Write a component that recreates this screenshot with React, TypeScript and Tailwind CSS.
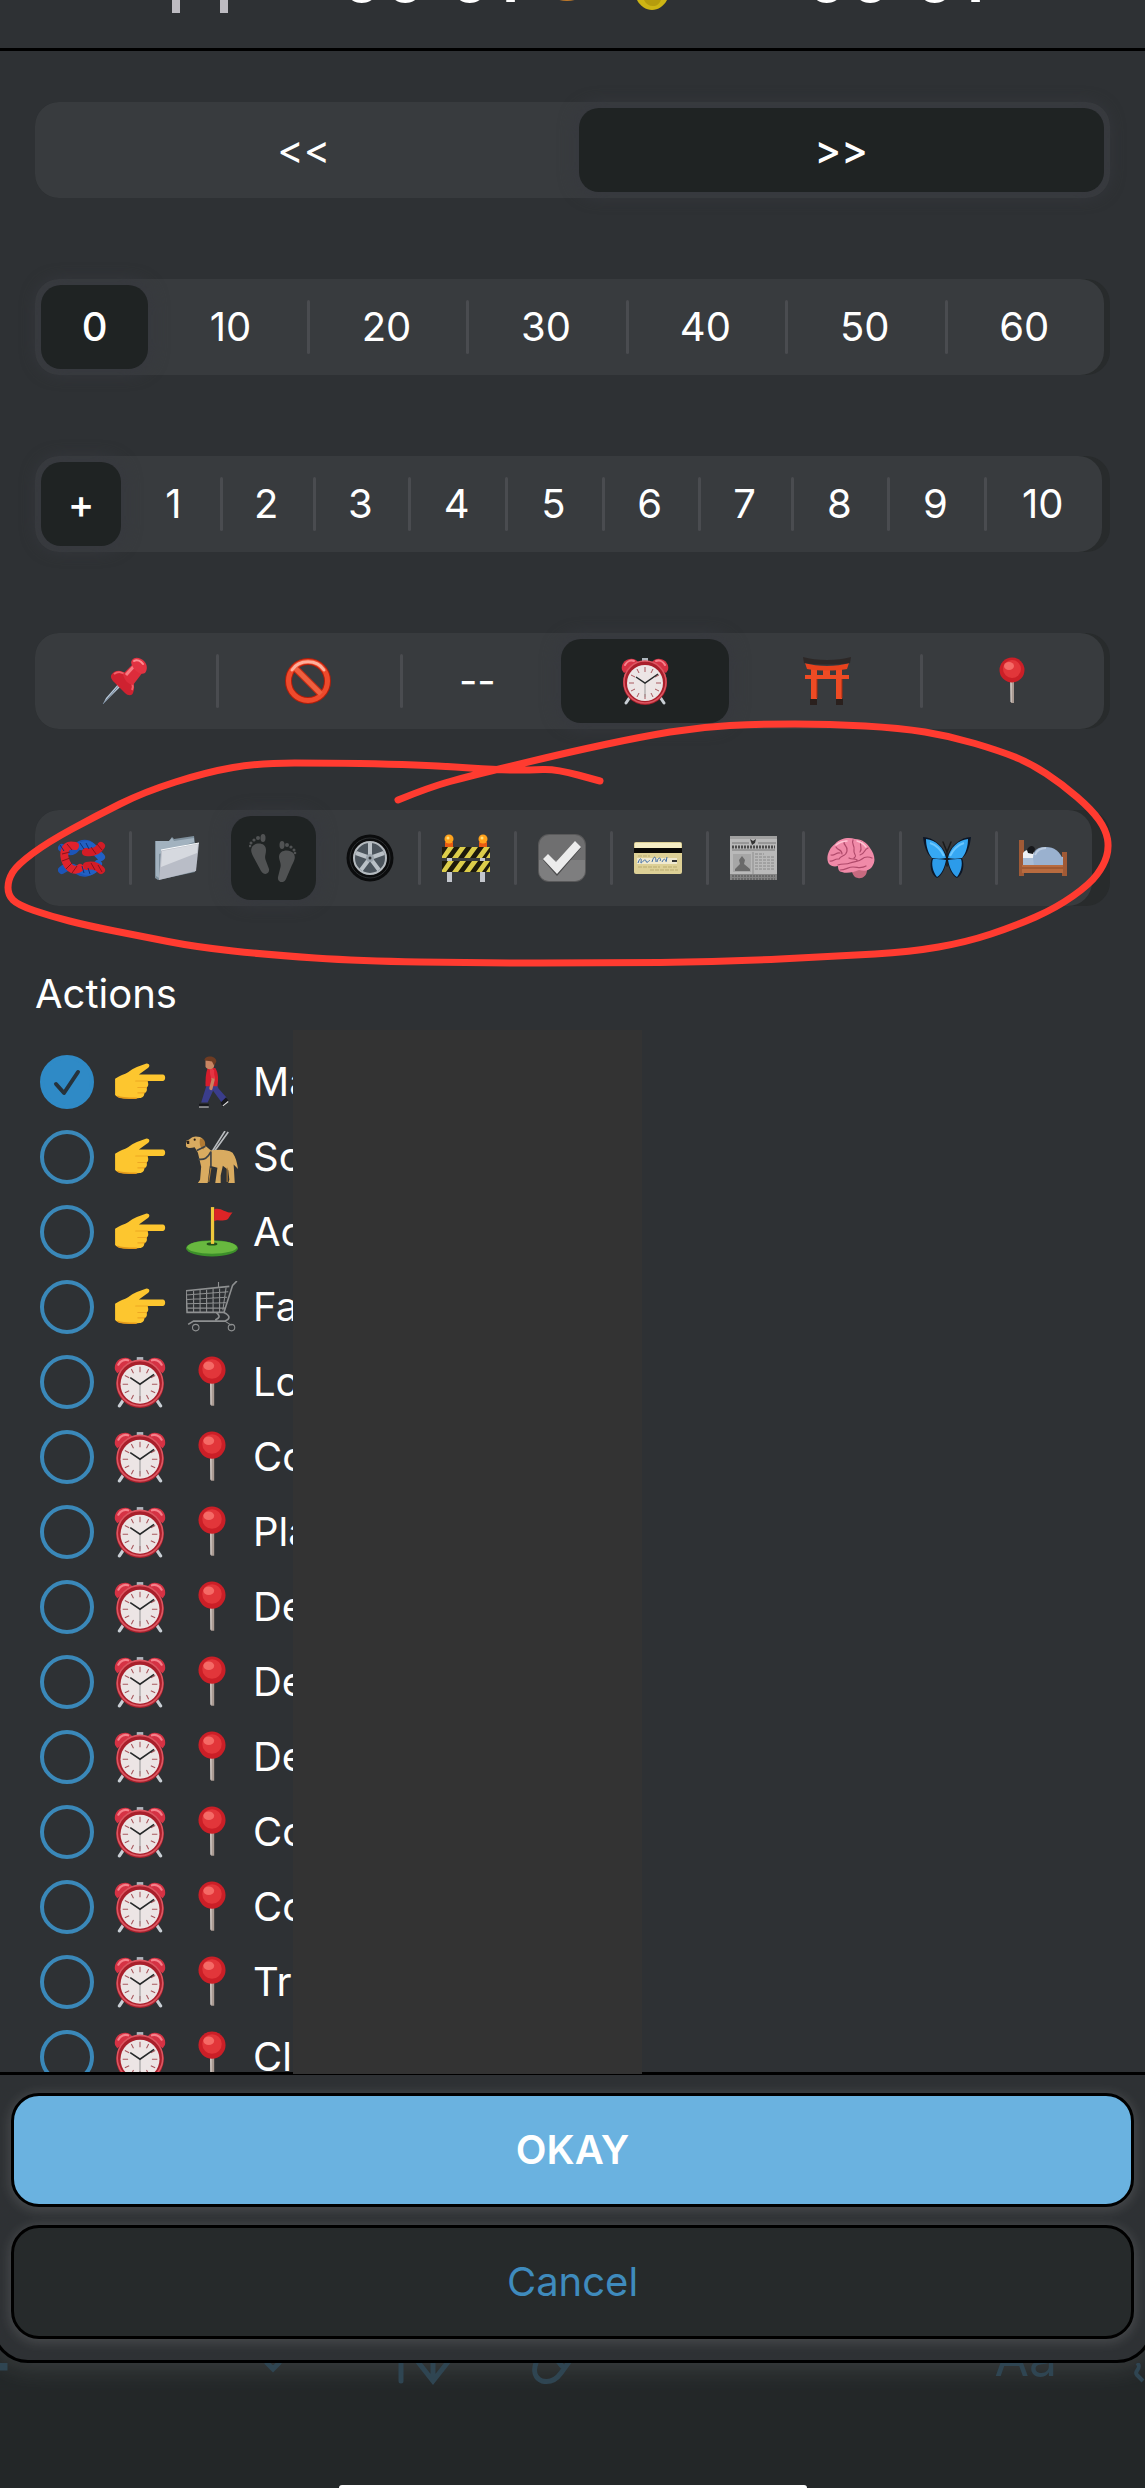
import { useState } from "react";
import type { ReactNode } from "react";

type IconProps = { className?: string };
type IconType = (props: IconProps) => ReactNode;

function Svg({ className = "size-12", children }: IconProps & { children: ReactNode }) {
  return (
    <svg viewBox="0 0 48 48" className={className} fill="none" aria-hidden="true">
      {children}
    </svg>
  );
}

const Pushpin: IconType = (p) => (
  <Svg {...p}>
    <path d="M20 28 1 47l3-6 14-16z" fill="#b9c9da" />
    <path d="M1 47 19 26" stroke="#6f8194" strokeWidth="1" />
    <path d="M10 17c4-5 10-4 15 1 6 5 9 11 6 18-1 3-5 3-8 0L12 25c-3-3-4-6-2-8Z" fill="#cf2230" />
    <path d="M12 17c4-3 9-2 13 2 5 5 7 10 5 14" stroke="#f2606a" strokeWidth="2" />
    <path d="m21 17 10-10 10 8-10 13c-5-1-9-5-10-11Z" fill="#dd2c3b" />
    <path d="m24 18 9-10" stroke="#f77b82" strokeWidth="3" />
    <path d="M30 3c3-4 9-2 12 1s4 8 1 12c-3 2-7 0-10-3-3-4-5-7-3-10Z" fill="#e23342" />
    <path d="M32 4c3-2 7 0 9 3" stroke="#ff8d92" strokeWidth="2" strokeLinecap="round" />
  </Svg>
);

const Prohibited: IconType = (p) => (
  <Svg {...p}>
    <circle cx="24" cy="24" r="19.500" stroke="#b21d0a" strokeWidth="7" />
    <path d="m11 11 26 26" stroke="#c92b12" strokeWidth="7" />
    <circle cx="24" cy="24" r="19.500" stroke="#ee4a2c" strokeWidth="5" />
    <path d="m11 11 26 26" stroke="#f0603f" strokeWidth="5" />
    <path d="M8 13C15 2 33 2 40 13" stroke="#ffb09c" strokeWidth="3" strokeLinecap="round" />
  </Svg>
);

const AlarmClock: IconType = (p) => (
  <Svg {...p}>
    <path d="m9 40-4 6M39 40l4 6" stroke="#c8ced4" strokeWidth="3" strokeLinecap="round" />
    <path d="M21 1h6v5h-6z" fill="#aeb6bd" />
    <path d="M1 13C-1 5 8-1 15 3l3 3L3 16Z" fill="#d63244" />
    <path d="M47 13C49 5 40-1 33 3l-3 3 15 10Z" fill="#d63244" />
    <path d="M4 8c2-4 6-5 9-4M44 8c-2-4-6-5-9-4" stroke="#f5818b" strokeWidth="2" strokeLinecap="round" />
    <circle cx="24" cy="26" r="22" fill="#a91f2b" />
    <circle cx="24" cy="25" r="21" stroke="#dc5661" strokeWidth="1.500" />
    <circle cx="24" cy="26" r="18" fill="#ece5e5" />
    <path
      d="M24 10v5M24 37v5M8 26h5M35 26h5M16 12l2 4M32 12l-2 4M10 18l4 2M38 18l-4 2M10 34l4-2M38 34l-4-2M16 40l2-4M32 40l-2-4"
      stroke="#a8585e"
      strokeWidth="1"
    />
    <path d="M24 26v14" stroke="#999" strokeWidth="1" />
    <path d="m15 20 9 6 13-9" stroke="#26292a" strokeWidth="1.500" />
  </Svg>
);

const Torii: IconType = (p) => (
  <Svg {...p}>
    <path d="M8 12h6v34H8zM33 12h6v34h-6z" fill="#ee4b24" />
    <path d="M7 42h7v6H7zM33 42h7v6h-7z" fill="#2a201d" />
    <path d="M2 18h44v4H2zM20 9h7v10h-7z" fill="#ee4b24" />
    <path d="M2 6c12 4 32 4 44 0l-2 6c-12 2-28 2-40 0Z" fill="#e8421d" />
    <path d="M0 0c13 4 35 4 48 0l-1 6C34 8 14 8 1 6Z" fill="#2d2827" />
    <path d="M14 22v19M39 22v19" stroke="#a72c10" strokeWidth="1" />
  </Svg>
);

const RoundPin: IconType = (p) => (
  <Svg {...p}>
    <path d="M22 22h4v24h-3z" fill="#a99a92" />
    <path d="M23 24v21" stroke="#e5ddd8" strokeWidth="1" />
    <circle cx="24" cy="13" r="12.500" fill="#cb1f27" />
    <circle cx="24" cy="12" r="9" fill="#e2363a" />
    <ellipse cx="21" cy="9" rx="5" ry="4" fill="#f56a66" />
  </Svg>
);

const Knot: IconType = (p) => (
  <Svg {...p}>
    <g strokeWidth="8" strokeLinecap="round">
      <path d="M4 14c6 4 10 5 14 0 6-6 12-5 16-1" stroke="#1c55b8" />
      <path d="M4 36c5-4 9-4 15 0 7 5 12 2 17-1" stroke="#1c55b8" />
      <path d="M24 12c8-3 12 2 16 8l3 3M24 36c8 4 12 0 16-6" stroke="#2160c4" />
      <path d="M43 12c-4 6-9 7-15 6" stroke="#d31c26" />
      <path d="M43 36c-5-5-9-5-14-4" stroke="#d31c26" />
      <path d="M17 12C5 9 5 21 8 28s9 10 14 6" stroke="#e0222c" />
    </g>
    <path
      d="m4 20 8-2M4 27l8-3M8 35l6-6M14 39l5-7M9 10l5 6M33 13l5 7M39 10l5 6M33 29l4 7M40 31l4 7"
      stroke="#85131b"
      strokeWidth="1"
    />
    <path d="m22 9 4 6M28 9l3 6M24 32l2 7M30 34l2 6M2 11l4 6" stroke="#0d3276" strokeWidth="1" />
  </Svg>
);

const Folder: IconType = (p) => (
  <Svg {...p}>
    <path d="M2 7h14l3-4 2 2 20-3 1 8v28L5 46 2 44Z" fill="#7f909d" />
    <path d="M3 7h13l3-3 2 3 20-3v4L6 20v24l-3-2Z" fill="#a2b2bf" />
    <path d="M8 16 46 9l-3 28L6 46Z" fill="#b9bdc7" />
    <path d="m9 17 36-7-1 9L8 33Z" fill="#d6d9df" />
    <path d="M8 16 46 9" stroke="#fafbfc" strokeWidth="1" />
  </Svg>
);

const Footprints: IconType = (p) => (
  <Svg {...p}>
    <g fill="#505253">
      <path d="M3 13c3-5 14-5 14 3 0 5-2 6 0 11l3 8c1 5-5 7-8 2L5 24c-2-4-4-7-2-11Z" />
      <ellipse cx="14" cy="4" rx="2.500" ry="4" />
      <circle cx="9" cy="4" r="2" />
      <circle cx="5" cy="6" r="1.600" />
      <circle cx="2" cy="9" r="1.500" />
      <circle cx="1" cy="12" r="1.300" />
      <path d="M45 20c-3-5-15-5-15 3 0 4 3 6 1 12l-2 8c-1 6 6 7 8 2l6-14c2-4 4-7 2-11Z" />
      <ellipse cx="33" cy="11" rx="2.500" ry="4" />
      <circle cx="38" cy="11" r="2" />
      <circle cx="42" cy="13" r="1.600" />
      <circle cx="45" cy="16" r="1.500" />
      <circle cx="46" cy="19" r="1.300" />
    </g>
  </Svg>
);

const Wheel: IconType = (p) => (
  <Svg {...p}>
    <circle cx="24" cy="24" r="23.500" fill="#0b0c0d" />
    <circle cx="24" cy="24" r="20" stroke="#2b2e30" strokeWidth="1" />
    <circle cx="24" cy="24" r="16" fill="#4b545c" stroke="#b4babf" strokeWidth="2" />
    <path d="M24 24V9M24 24l14-5M24 24l9 12M24 24l-9 12M24 24 10 19" stroke="#b9c0c6" strokeWidth="4" />
    <circle cx="24" cy="24" r="4" fill="#9ba4ac" />
    <circle cx="24" cy="24" r="1.500" fill="#303539" />
  </Svg>
);

const Barrier: IconType = (p) => (
  <Svg {...p}>
    <path d="M5 16h5v32H5zM38 16h5v32h-5z" fill="#c3c6cc" />
    <path d="M3 8h8v6H3zM37 8h8v6h-8z" fill="#e75b12" />
    <circle cx="7" cy="5" r="4.500" fill="#ffa21c" />
    <circle cx="41" cy="5" r="4.500" fill="#ffa21c" />
    <circle cx="6" cy="4" r="1.500" fill="#ffe07a" />
    <circle cx="40" cy="4" r="1.500" fill="#ffe07a" />
    <path d="M0 13h48v11H0zM0 27h48v11H0z" fill="#dccd4a" />
    <path
      d="M0 13h6l-6 9zM12 13h6l-8 11H4zM24 13h6l-8 11h-6zM36 13h6l-8 11h-6zM48 13v5l-4 6h-4zM0 27h6l-6 9zM12 27h6l-8 11H4zM24 27h6l-8 11h-6zM36 27h6l-8 11h-6zM48 27v5l-4 6h-4z"
      fill="#1d1a0c"
    />
  </Svg>
);

const CheckTile: IconType = (p) => (
  <Svg {...p}>
    <rect x="0" y="0" width="48" height="48" rx="11" fill="#59595a" />
    <rect x="1" y="1" width="46" height="46" rx="10" fill="#6f6f70" />
    <path d="M1 26h46v11a10 10 0 0 1-10 10H11A10 10 0 0 1 1 37Z" fill="#7e7e7f" />
    <path d="m5 26 5-5 8 8L37 8l6 6-24 28Z" fill="#4a4a4b" />
    <path d="m5 25 5-5 8 8L37 7l6 6-24 27Z" fill="#ececec" />
  </Svg>
);

const Card: IconType = (p) => (
  <Svg {...p}>
    <rect x="0" y="8" width="48" height="32" rx="2" fill="#ddd096" />
    <path d="M1 9h46v5H1z" fill="#f5edc4" />
    <path d="M0 14h48v5H0z" fill="#0b0a07" />
    <path d="M3 24h40v6H3z" fill="#efe9cf" />
    <path
      d="M4 29c2-6 4-5 3-1s4-5 5-1 3-2 4 0m2 1c2-7 4-6 4 0m1 0c1-6 5-4 3-1m2 1c2-4 3-3 4-1m1-4-1 5"
      stroke="#3d6ca8"
      strokeWidth="1"
    />
    <path d="M38 27h5" stroke="#333" strokeWidth="2" />
    <path d="M4 22h12M4 33h22M29 33h14M16 36h28" stroke="#b9ac70" strokeWidth="1" strokeDasharray="4 1" />
  </Svg>
);

const Newspaper: IconType = (p) => (
  <Svg {...p}>
    <path d="M0 2h47v44H0z" fill="#b9b9b9" />
    <path d="M0 2h47v3H0z" fill="#a0a0a0" />
    <path d="m20 5 3 2 3-2-1 4-3 2Z" fill="#333" />
    <path d="M2 9h17M28 9h18M2 16h43" stroke="#777" strokeWidth="1" />
    <path d="M2 13h43" stroke="#4c4c4c" strokeWidth="3" strokeDasharray="2 1" />
    <path d="M3 20h18v18H3z" fill="#a6a6a6" />
    <path d="m12 22 3 4-1 4 6 5v2H5v-2l5-5-1-4Z" fill="#6a6a6a" />
    <path d="M25 20h9M25 23h20M25 26h20M25 29h20M25 32h20M25 35h20" stroke="#888" strokeWidth="1" strokeDasharray="3 1" />
    <path d="M0 40h47v6H0z" fill="#858585" />
    <path d="M2 42h43M2 45h43" stroke="#4f4f4f" strokeWidth="1" strokeDasharray="2 1" />
    <path d="M23 18v22" stroke="#8c8c8c" strokeWidth="1" />
  </Svg>
);

const Brain: IconType = (p) => (
  <Svg {...p}>
    <path d="M27 34c5-2 11-2 13 2 0 6-5 9-9 8-3 0-5-3-6-6Z" fill="#c76a80" />
    <path
      d="M2 30C-2 24 2 14 8 10 13 4 22 3 28 5c7 0 12 4 15 9 4 5 6 12 3 17-2 5-8 7-14 5-5 2-12 4-17 2-3 0-4-3-4-6-4 1-7 0-9-2Z"
      fill="#f08aa8"
    />
    <path
      d="M11 31c5-2 8 0 12-2s9-1 12-4 8-2 10-1M4 21c4 1 5-3 9-2M9 13c2 4 6 2 6 7M17 7c-1 5 4 4 3 10s-6 4-8 8M26 6c-2 4 2 5 1 10s4 5 0 8M34 8c-2 4 2 6-1 10M41 14c-4 1-3 6-8 7M13 36c6 0 8-3 13-3s8 2 13-1M3 27c3 1 4-2 8-2M22 24c3 2 6 0 8 2"
      stroke="#b04a6b"
      strokeWidth="1.200"
      strokeLinecap="round"
    />
    <path d="M9 11c4-3 7-4 11-4M30 7c4 1 7 3 9 6" stroke="#ffc4d4" strokeWidth="1.500" strokeLinecap="round" />
  </Svg>
);

const Butterfly: IconType = (p) => (
  <Svg {...p}>
    <path
      d="M0 3c10 0 21 9 24 20C27 12 38 3 48 3c-1 9-4 18-9 21 3 7 1 17-5 20-5-2-8-10-10-17-2 7-5 15-10 17-6-3-8-13-5-20C4 21 1 12 0 3Z"
      fill="#0c1626"
    />
    <path d="M3 5c10 1 18 9 20 19-5 1-9 1-14 0C5 19 3 12 3 5ZM45 5c-10 1-18 9-20 19 5 1 9 1 14 0 4-5 6-12 6-19Z" fill="#36a8f3" />
    <path d="M10 25c5 0 9 0 13 1-1 6-4 14-9 17-4-5-6-13-4-18ZM38 25c-5 0-9 0-13 1 1 6 4 14 9 17 4-5 6-13 4-18Z" fill="#2c9bea" />
    <path d="M7 9c6 2 11 7 14 13M41 9c-6 2-11 7-14 13" stroke="#6bc7ff" strokeWidth="2" />
    <path d="M24 18v14M24 18l-4-10M24 18l4-10" stroke="#1a1a1a" strokeWidth="1.500" strokeLinecap="round" />
  </Svg>
);

const Bed: IconType = (p) => (
  <Svg {...p}>
    <path d="M0 6h5v36H0z" fill="#a05a36" />
    <path d="M43 18h5v24h-5z" fill="#a05a36" />
    <path d="M4 23h40v9H4z" fill="#a9bdd6" />
    <path d="M4 19c3-4 8-4 11-1v6H4Z" fill="#eef1f5" />
    <path d="M8 16c2-5 7-5 8-1l-2 5-5-1Z" fill="#17181b" />
    <path d="M14 24c0-8 5-11 13-11s14 4 17 13v6H15Z" fill="#9ab1cf" />
    <path d="M16 21c2-5 6-7 11-7" stroke="#bccce0" strokeWidth="2" />
    <path d="M3 31h41v8H3z" fill="#b86b3f" />
    <path d="M3 34h41" stroke="#8a4a29" strokeWidth="1" />
  </Svg>
);

const PointRight: IconType = (p) => (
  <Svg {...p}>
    <path
      d="M1 21c4-3 9-4 12-6 5-4 11-6 17-8 4 0 3 4 0 5l-7 5h22c3 0 3 6 0 6H31c1 3 1 5-1 6 1 2 0 5-2 5 0 4-2 5-6 5H9c-3 0-6-1-8-3Z"
      fill="#fdc62f"
    />
    <path d="M31 23H20M30 29h-8M28 34h-6" stroke="#eda823" strokeWidth="1" strokeLinecap="round" />
    <path d="M3 37c3 2 8 2 18 2" stroke="#e59a1b" strokeWidth="1.500" />
  </Svg>
);

const Walker: IconType = (p) => (
  <Svg {...p}>
    <path d="m19 27-5 16h6l5-11 8 11 5-4-8-9-2-5Z" fill="#3a3d8c" />
    <path d="M12 44h9v3h-9zM32 43l5-5 2 3-5 6Z" fill="#17181d" />
    <path d="M12 47h9M34 46l5-4" stroke="#ddd" strokeWidth="1" />
    <path d="M20 11h7c3 5 3 10 2 17H18c0-6 0-12 2-17Z" fill="#d51d2c" />
    <path d="m24 14 1 8-2 8" stroke="#c88361" strokeWidth="3" strokeLinecap="round" />
    <path d="m22 12 4 1v8l-3-1Z" fill="#e63443" />
    <path d="M18 4h8v5c0 4-7 4-8 1Z" fill="#c98562" />
    <path d="M17 4c0-5 11-5 11 1l-2 4-2-4Z" fill="#6e3b22" />
  </Svg>
);

const GuideDog: IconType = (p) => (
  <Svg {...p}>
    <path d="M36 0 24 19M39 1 26 19" stroke="#b9bcbf" strokeWidth="1.500" />
    <path
      d="M0 9c4-1 5-4 9-4 6 0 8 3 8 8l6 5c8-1 15-1 20 2 3 4 4 9 5 15l-4-4 1 17h-6l1-3-1-9-5-4-2 9v7h-5l2-14-7-2-2 16h-9l2-3 1-12-3-13-3-5c-4 1-7 1-8-1Z"
      fill="#d9ab60"
    />
    <path d="M13 7c5-1 6 6 3 10-3-1-4-6-3-10Z" fill="#b27a33" />
    <path d="M0 9h3v3H1Z" fill="#2b211b" />
    <circle cx="8" cy="8" r="1" fill="#251b12" />
    <path d="m10 18 8-4M11 26c6 1 9-1 12-7v15" stroke="#3d4145" strokeWidth="1.500" />
    <path d="M38 34v13M23 34l-2 13" stroke="#a87835" strokeWidth="1" />
  </Svg>
);

const GolfFlag: IconType = (p) => (
  <Svg {...p}>
    <ellipse cx="24" cy="39" rx="24" ry="7.500" fill="#3c8f2a" />
    <ellipse cx="24" cy="38" rx="23" ry="6" fill="#68b83f" />
    <ellipse cx="24" cy="35" rx="5" ry="1.500" fill="#234f1b" />
    <path d="M23 1h3v34h-3z" fill="#f0c83c" />
    <path d="M26 3c7-2 10 4 17 3-3 3-3 6-6 7-5 1-8-1-11 1Z" fill="#dc2426" />
  </Svg>
);

const Cart: IconType = (p) => (
  <Svg {...p}>
    <g stroke="#8e9091" strokeWidth="1">
      <path d="m47 0-4 4-8 25H1L0 9l40-4" strokeWidth="1.500" />
      <path d="m0 13 39-3M1 17l37-2M1 21l36-1M1 25h35M7 9v20M13 8v21M19 8v21M25 7v22M31 7v22M37 6l-3 21" />
      <path d="M35 29c6 3 6 6 1 8H7l-5 3M28 29c4 4 3 5-1 7" strokeWidth="1.500" />
      <circle cx="9" cy="43" r="3" />
      <circle cx="42" cy="43" r="3" />
      <path d="m36 37 6 4M30 1v5" />
    </g>
  </Svg>
);

type Option = { id: string; label?: string; Icon?: IconType };

const numbers = (values: string[]): Option[] => values.map((v) => ({ id: v, label: v }));

const directions = numbers(["<<", ">>"]);
const tens = numbers(["0", "10", "20", "30", "40", "50", "60"]);
const ones = numbers(["+", "1", "2", "3", "4", "5", "6", "7", "8", "9", "10"]);

const kinds: Option[] = [
  { id: "pinned", Icon: Pushpin },
  { id: "blocked", Icon: Prohibited },
  { id: "none", label: "--" },
  { id: "alarm", Icon: AlarmClock },
  { id: "gate", Icon: Torii },
  { id: "place", Icon: RoundPin },
];

const categories: Option[] = [
  { id: "knot", Icon: Knot },
  { id: "folder", Icon: Folder },
  { id: "steps", Icon: Footprints },
  { id: "wheel", Icon: Wheel },
  { id: "barrier", Icon: Barrier },
  { id: "check", Icon: CheckTile },
  { id: "card", Icon: Card },
  { id: "news", Icon: Newspaper },
  { id: "brain", Icon: Brain },
  { id: "butterfly", Icon: Butterfly },
  { id: "bed", Icon: Bed },
];

const actions: { text: string; first: IconType; second: IconType }[] = [
  { text: "Ma", first: PointRight, second: Walker },
  { text: "Sc", first: PointRight, second: GuideDog },
  { text: "Ac", first: PointRight, second: GolfFlag },
  { text: "Fa", first: PointRight, second: Cart },
  ...["Lo", "Co", "Pla", "De", "De", "De", "Co", "Co", "Tr", "Cl"].map((text) => ({
    text,
    first: AlarmClock,
    second: RoundPin,
  })),
];

type SegmentedProps = {
  name: string;
  options: Option[];
  initial: string;
  columns: string;
  end?: string;
};

function Segmented({ name, options, initial, columns, end = "mr-1.5" }: SegmentedProps) {
  const [value, setValue] = useState(initial);
  const active = options.findIndex((o) => o.id === value);

  return (
    <div role="group" aria-label={name} className="rounded-3xl bg-[#282b2c]">
      <div className={`grid h-24 rounded-3xl bg-[#383b3e] ${columns} ${end}`}>
        {options.map(({ id, label, Icon }, i) => {
          const divided = i > 0 && i !== active && i !== active + 1;
          return (
            <div key={id} className="flex items-center">
              <span className={`h-[54px] w-[3px] shrink-0 rounded ${divided ? "bg-[#4a4c50]" : ""}`} />
              <button
                type="button"
                aria-label={label ?? id}
                aria-pressed={i === active}
                onClick={() => setValue(id)}
                className={`mr-1.5 ml-[3px] flex h-[84px] min-w-0 flex-1 items-center justify-center rounded-[20px] ${
                  i === active ? "bg-[#1f2323] font-medium shadow-[0_0_16px_4px_#37393f]" : ""
                }`}
              >
                {Icon ? <Icon /> : label}
              </button>
            </div>
          );
        })}
      </div>
    </div>
  );
}

// points of the hand-drawn loop round the category row
const loop = [
  [398, 90], [430, 77], [470, 66], [520, 54], [570, 42], [640, 27], [700, 17], [760, 14], [830, 14],
  [900, 18], [950, 26], [1000, 41], [1030, 53], [1062, 74], [1092, 100], [1106, 120], [1109, 138],
  [1104, 155], [1090, 174], [1056, 198], [1015, 216], [967, 232], [910, 242], [840, 246], [720, 252],
  [600, 253], [480, 253], [360, 251], [270, 245], [196, 237], [140, 226], [89, 216], [50, 206],
  [18, 195], [8, 185], [8, 170], [17, 155], [48, 132], [96, 106], [144, 82], [207, 62], [259, 53],
  [330, 53], [390, 54], [440, 56], [500, 60], [530, 60], [556, 59], [600, 71],
];

function loopPath() {
  let d = `M${loop[0][0]} ${loop[0][1]}`;
  for (let i = 1; i < loop.length - 1; i++) {
    const [x, y] = loop[i];
    const [nx, ny] = loop[i + 1];
    d += `Q${x} ${y} ${(x + nx) / 2} ${(y + ny) / 2}`;
  }
  const [lx, ly] = loop[loop.length - 1];
  return `${d}L${lx} ${ly}`;
}

export default function App() {
  const [checked, setChecked] = useState<number[]>([0]);

  const toggle = (i: number) =>
    setChecked((prev) => (prev.includes(i) ? prev.filter((n) => n !== i) : [...prev, i]));

  return (
    <div className="min-h-screen overflow-hidden bg-[#232728] font-['Inter',sans-serif] text-[40px] leading-[48px] text-white">
      <header className="flex h-[51px] items-start overflow-hidden border-b-[3px] border-black bg-[#2e3134] pl-[172px]">
        <svg viewBox="0 0 56 13" className="h-[13px] w-14 shrink-0" fill="#bdbbc1" aria-hidden="true">
          <path d="M0 0h8v13H0zM48 0h8v13h-8z" />
        </svg>
        <span className="-mt-[62px] ml-[112px] w-[198px] shrink-0 text-[66px] leading-[80px] font-semibold">00:01</span>
        <svg viewBox="0 0 140 13" className="ml-3 h-[13px] w-[140px] shrink-0" aria-hidden="true">
          <ellipse cx="17" cy="-12" rx="20" ry="13" fill="#c07a2a" />
          <path d="M87 0c3 6 9 10 15 10s12-4 15-10Z" fill="#cdb514" />
          <path d="M94 0c2 4 5 6 9 6s6-2 8-6Z" fill="#b59c0d" />
        </svg>
        <span className="-mt-[62px] ml-[115px] shrink-0 text-[66px] leading-[80px] font-semibold">00:01</span>
      </header>

      <main className="relative bg-[#2e3134] px-[35px] pt-[51px]">
        <div className="flex flex-col gap-[81px]">
          <Segmented name="Direction" options={directions} initial=">>" columns="grid-cols-2" end="mr-0" />
          <Segmented
            name="Tens"
            options={tens}
            initial="0"
            columns="grid-cols-[119fr_152fr_repeat(5,159fr)]"
          />
          <Segmented
            name="Ones"
            options={ones}
            initial="+"
            columns="grid-cols-[92fr_92fr_93fr_95fr_97fr_96fr_96fr_93fr_96fr_96fr_118fr]"
            end="mr-2"
          />
          <Segmented
            name="Kind"
            options={kinds}
            initial="alarm"
            columns="grid-cols-[181fr_183fr_155fr_180fr_184fr_184fr]"
          />
          <Segmented
            name="Category"
            options={categories}
            initial="steps"
            columns="grid-cols-[94fr_repeat(9,96fr)_97fr]"
            end="mr-[18px]"
          />
        </div>

        <svg
          viewBox="0 0 1145 270"
          className="pointer-events-none absolute top-[659px] left-0 w-full"
          fill="none"
          aria-hidden="true"
        >
          <path d={loopPath()} stroke="#ff3b30" strokeWidth="7" strokeLinecap="round" strokeLinejoin="round" />
        </svg>

        <h2 className="mt-16">Actions</h2>
        <div className="relative pt-[26px]">
          <ul className="h-[1028px] overflow-hidden pl-[5px]">
            {actions.map(({ text, first: First, second: Second }, i) => (
              <li key={i}>
                <label className="flex h-[75px] items-center">
                  <span className="grid shrink-0 place-items-center">
                    <input
                      type="checkbox"
                      checked={checked.includes(i)}
                      onChange={() => toggle(i)}
                      className="col-start-1 row-start-1 size-[54px] appearance-none rounded-full border-4 border-[#3a88b9] checked:border-[#2f8ac6] checked:bg-[#2f8ac6]"
                    />
                    {checked.includes(i) && (
                      <svg
                        viewBox="0 0 54 54"
                        className="pointer-events-none col-start-1 row-start-1 size-[54px]"
                        fill="none"
                        aria-hidden="true"
                      >
                        <path
                          d="m16 29 8 9 14-21"
                          stroke="#26323b"
                          strokeWidth="4"
                          strokeLinecap="round"
                          strokeLinejoin="round"
                        />
                      </svg>
                    )}
                  </span>
                  <First className="ml-5 size-[52px] shrink-0" />
                  <Second className="ml-5 size-[52px] shrink-0" />
                  <span className="ml-[15px]">{text}</span>
                </label>
              </li>
            ))}
          </ul>
          <div className="absolute top-3 -bottom-0.5 left-[258px] z-10 w-[349px] bg-[#333333]" />
        </div>
      </main>

      <footer className="-mx-2 flex flex-col gap-[18px] rounded-b-[36px] border-[3px] border-black bg-[#2e3134] px-4 pt-[18px] pb-[21px] shadow-[0_4px_28px_rgba(255,255,255,0.12)]">
        <button
          type="button"
          className="h-[114px] rounded-[28px] border-[3px] border-black bg-[#6ab2e0] font-semibold shadow-[0_2px_12px_2px_rgba(255,255,255,0.12)]"
        >
          OKAY
        </button>
        <button
          type="button"
          className="h-[114px] rounded-[28px] border-[3px] border-black bg-[#262a2b] text-[#3f8bbd] shadow-[0_2px_12px_2px_rgba(255,255,255,0.12)]"
        >
          Cancel
        </button>
      </footer>

      <div className="flex h-[122px] items-start overflow-hidden text-[#2f4552]">
        <svg
          viewBox="0 0 600 24"
          className="h-6 w-[600px] shrink-0"
          fill="none"
          stroke="currentColor"
          strokeWidth="5"
          aria-hidden="true"
        >
          <path d="M0 0h5v5H0" />
          <path d="m267 0 6 6 6-6M401 0v18M418-1l15 19 15-19M433-8v22" strokeLinecap="round" />
          <path d="M536 0c-3 8-1 15 6 18 8 2 14-1 19-8l8-11M556-4l6 7" strokeLinecap="round" />
        </svg>
        <span className="-mt-[37px] ml-auto text-[50px] leading-[64px]">Aa</span>
        <svg
          viewBox="0 0 12 24"
          className="ml-[76px] h-6 w-3 shrink-0"
          fill="none"
          stroke="currentColor"
          strokeWidth="4"
          aria-hidden="true"
        >
          <path d="M4 0c6 5-4 8 0 12l6 6" />
        </svg>
      </div>
      <div className="mx-auto h-[3px] w-[468px] rounded-t-lg bg-white" />
    </div>
  );
}
